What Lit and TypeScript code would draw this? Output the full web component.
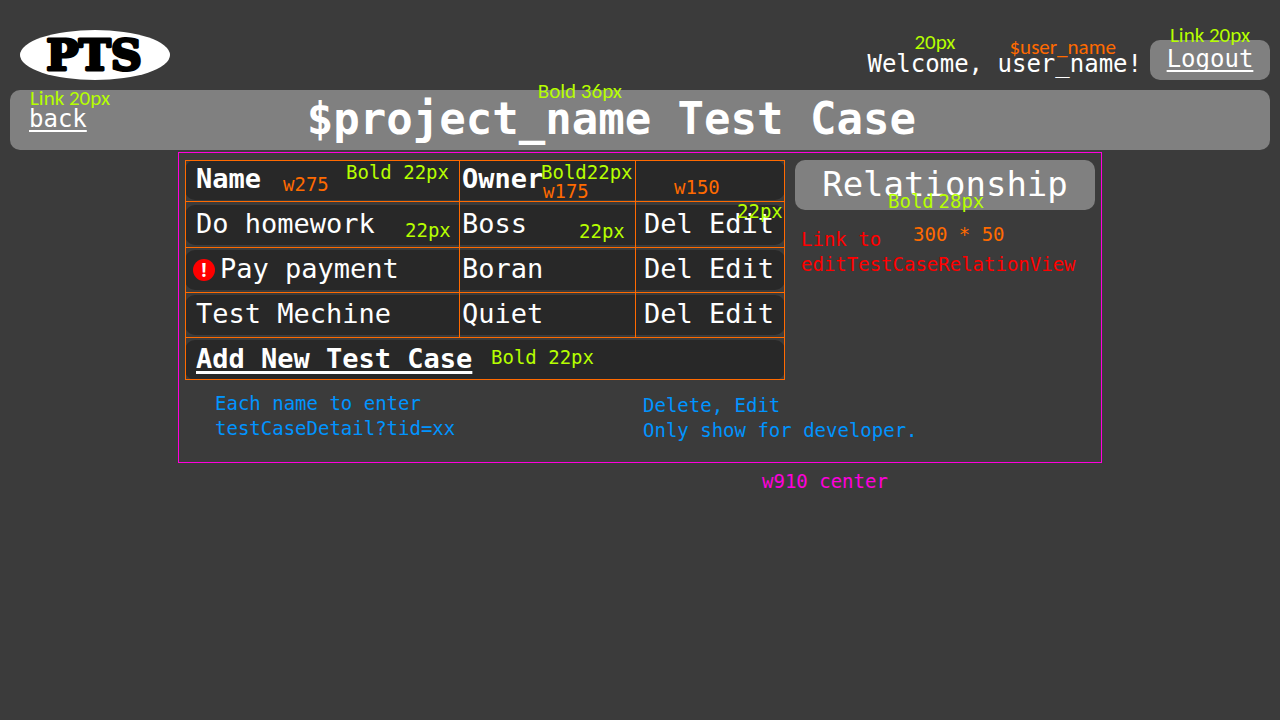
import { LitElement, html, css, nothing } from "lit";
import { customElement, state } from "lit/decorators.js";

interface TestCase {
  name: string;
  owner: string;
  alert: boolean;
}

@customElement("app-root")
export class AppRoot extends LitElement {
  @state() private cases: TestCase[] = [
    { name: "Do homework", owner: "Boss", alert: false },
    { name: "Pay payment", owner: "Boran", alert: true },
    { name: "Test Mechine", owner: "Quiet", alert: false },
  ];

  static styles = css`
    :host {
      display: block;
      min-height: 100vh;
      background: #3b3b3b;
      color: #fff;
      font-family: Consolas, "DejaVu Sans Mono", monospace;
      font-size: 27px;
    }
    * { box-sizing: border-box; }
    p, h1 { margin: 0; }
    a { color: inherit; text-decoration: none; }

    /* header */
    .top {
      display: flex;
      align-items: flex-end;
      gap: 8px;
      padding: 30px 10px 10px 20px;
    }
    .logo { display: block; width: 150px; height: 50px; margin-right: auto; }
    .logo text {
      font: bold 43px "DejaVu Serif", serif;
      stroke: #000;
      stroke-width: 3px;
      stroke-linejoin: round;
    }
    .welcome {
      position: relative;
      padding-bottom: 2px;
      font-size: 24px;
      line-height: 28px;
      white-space: nowrap;
    }
    .underlined {
      text-decoration: underline 2px;
      text-underline-offset: 3px;
      text-decoration-skip-ink: none;
    }
    .logout {
      position: relative;
      width: 120px;
      padding-bottom: 2px;
      border-radius: 10px;
      background: #808080;
      font-size: 24px;
      line-height: 38px;
      text-align: center;
    }

    /* title bar */
    .bar {
      position: relative;
      display: flex;
      margin: 0 10px;
      padding: 0 134px 2px 19px;
      border-radius: 10px;
      background: #808080;
    }
    .back { font-size: 24px; line-height: 58px; }
    .title {
      flex: 1;
      font-size: 44px;
      font-weight: bold;
      line-height: 58px;
      text-align: center;
    }
    .title-text { position: relative; display: inline-block; }

    /* content frame */
    .content { max-width: 924px; margin: 2px auto 0; }
    .frame { padding: 7px 6px 19px; border: 1px solid #ff00dc; }
    .columns { display: flex; gap: 10px; }
    .list { position: relative; flex: 2; }
    .side { position: relative; flex: 1; }

    table {
      width: 100%;
      margin: -5px 0;
      border-collapse: separate;
      border-spacing: 0 5px;
      table-layout: fixed;
    }
    .col-name { width: 275px; }
    .col-owner { width: 176px; }
    th, td {
      position: relative;
      height: 40px;
      padding: 0 0 2px 2px;
      background: #282828;
      line-height: 38px;
      text-align: left;
      vertical-align: top;
      white-space: nowrap;
    }
    th:first-child, td:first-child { padding-left: 11px; border-radius: 10px 0 0 10px; }
    th:last-child, td:last-child { padding-left: 8px; border-radius: 0 10px 10px 0; }
    td:only-child { padding-left: 11px; border-radius: 10px; }
    .add {
      font-weight: bold;
      text-decoration: underline 3px;
      text-underline-offset: 3px;
    }
    .alerted { display: flex; align-items: center; gap: 5px; margin-left: -3px; }
    .alert { display: block; width: 22px; height: 22px; overflow: visible; }
    .alert text { font: bold 19px "Open Sans", sans-serif; }

    /* measurement lines drawn over the table */
    .guides {
      position: absolute;
      inset: 0;
      display: grid;
      grid-template-columns: 274px 176px 1fr;
      grid-template-rows: 41px 46px 45px 45px 1fr;
      border: 1px solid #ff6a00;
      pointer-events: none;
    }
    .guides i { border: solid #ff6a00; border-width: 0 1px 1px 0; }
    .guides i:nth-child(3n) { border-right: 0; }

    .relationship {
      display: block;
      padding-bottom: 2px;
      border-radius: 10px;
      background: #808080;
      font-size: 34px;
      line-height: 48px;
      text-align: center;
    }

    /* annotations */
    .note {
      font-size: 19px;
      font-weight: normal;
      line-height: 25px;
      white-space: nowrap;
      text-align: left;
    }
    .over { position: absolute; z-index: 1; line-height: 23px; pointer-events: none; }
    .sans, .thin { font-family: Calibri, Carlito, Lato, sans-serif; font-size: 21px; }
    .sans { line-height: 25px; }
    .lime { color: #b6ff00; }
    .orange { color: #ff6a00; }
    .blue { color: #0094ff; }
    .red { color: #f00; }
    .magenta { color: #ff00dc; }
    .n-size { left: 47px; top: -20px; }
    .n-user { left: 142px; top: -15px; }
    .n-logout { left: 20px; top: -17px; }
    .n-back { left: 20px; top: -4px; }
    .n-title { left: 231px; top: -11px; }
    .n-name { left: 161px; top: 1px; }
    .n-w275 { left: 98px; top: 13px; }
    .n-owner { left: 81px; top: 1px; }
    .n-w175 { left: 83px; top: 20px; }
    .n-w150 { left: 38px; top: 16px; }
    .n-cell1 { left: 220px; top: 14px; }
    .n-cell2 { left: 119px; top: 15px; }
    .n-cell3 { left: 101px; top: -5px; }
    .n-add { left: 306px; top: 6px; }
    .n-rel { left: 93px; top: 30px; }
    .n-dim { left: 118px; top: 63px; }
    .side-note { padding: 17px 0 0 6px; }
    .foot { display: grid; grid-template-columns: 428px 1fr; padding: 11px 0 0 30px; }
    .foot p + p { padding-top: 2px; }
    .width-note { padding: 6px 0 0 584px; }
  `;

  private renderName(c: TestCase) {
    if (!c.alert) return html`<a href="#">${c.name}</a>`;
    return html`<div class="alerted">
      <svg class="alert" viewBox="0 0 22 22" role="img" aria-label="Alert">
        <circle cx="11" cy="12" r="11" fill="#f00" />
        <text x="11" y="19" text-anchor="middle" fill="#fff">!</text>
      </svg>
      <a href="#">${c.name}</a>
    </div>`;
  }

  private renderRow(c: TestCase, first: boolean) {
    return html`<tr>
      <td>${this.renderName(c)}${first ? html`<span class="note over lime n-cell1">22px</span>` : nothing}</td>
      <td>${c.owner}${first ? html`<span class="note over lime n-cell2">22px</span>` : nothing}</td>
      <td><a href="#">Del</a> <a href="#">Edit</a>${first ? html`<span class="note over lime n-cell3">22px</span>` : nothing}</td>
    </tr>`;
  }

  render() {
    return html`
      <header class="top">
        <svg class="logo" viewBox="0 0 150 50" role="img" aria-label="PTS">
          <ellipse cx="75" cy="25" rx="75" ry="25" fill="#fff" />
          <text x="74" y="40" text-anchor="middle">PTS</text>
        </svg>
        <p class="welcome">Welcome, user_name!<span class="note over sans lime n-size">20px</span><span class="note over sans orange n-user">$user_name</span></p>
        <div class="logout">
          <a class="underlined" href="#">Logout</a>
          <span class="note over sans lime n-logout">Link 20px</span>
        </div>
      </header>
      <div class="bar">
        <a class="back underlined" href="#">back</a>
        <h1 class="title"><span class="title-text">$project_name Test Case<span class="note over sans lime n-title">Bold 36px</span></span></h1>
        <span class="note over sans lime n-back">Link 20px</span>
      </div>
      <main class="content">
        <div class="frame">
          <div class="columns">
            <section class="list">
              <table>
                <colgroup><col class="col-name" /><col class="col-owner" /><col /></colgroup>
                <thead>
                  <tr>
                    <th>Name<span class="note over orange n-w275">w275</span><span class="note over lime n-name">Bold 22px</span></th>
                    <th>Owner<span class="note over lime n-owner">Bold22px</span><span class="note over orange n-w175">w175</span></th>
                    <th><span class="note over orange n-w150">w150</span></th>
                  </tr>
                </thead>
                <tbody>
                  ${this.cases.map((c, i) => this.renderRow(c, i === 0))}
                  <tr>
                    <td colspan="3"><a class="add" href="#">Add New Test Case</a><span class="note over lime n-add">Bold 22px</span></td>
                  </tr>
                </tbody>
              </table>
              <div class="guides" aria-hidden="true">
                ${Array.from({ length: 12 }, () => html`<i></i>`)}
              </div>
            </section>
            <aside class="side">
              <a class="relationship" href="#">Relationship</a>
              <span class="note over lime n-rel">Bold<span class="thin"> </span>28px</span>
              <span class="note over orange n-dim">300 * 50</span>
              <p class="note red side-note">Link to<br />editTestCaseRelationView</p>
            </aside>
          </div>
          <div class="foot">
            <p class="note blue">Each name to enter<br />testCaseDetail?tid=xx</p>
            <p class="note blue">Delete, Edit<br />Only show for developer.</p>
          </div>
        </div>
        <p class="note magenta width-note">w910 center</p>
      </main>
    `;
  }
}
